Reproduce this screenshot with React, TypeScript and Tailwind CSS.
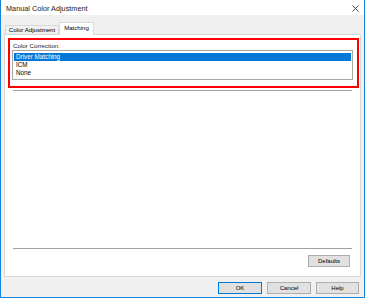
import React from 'react';

const options = ['Driver Matching', 'ICM', 'None'];

const DialogButton: React.FC<{ label: string; isDefault?: boolean; className?: string }> = ({ label, isDefault, className }) => (
  <button
    className={`h-[12px] flex items-center justify-center bg-[#e1e1e1] text-[6px] leading-none text-black border ${
      isDefault ? 'border-[#0078d7]' : 'border-[#adadad]'
    } ${className ?? ''}`}
  >
    {label}
  </button>
);

export default function App() {
  return (
    <div className="w-[365px] h-[299px] bg-white font-['Liberation_Sans',Arial,sans-serif] text-black">
      <div className="flex flex-col h-[298px] border-x border-b border-[#1883d7] bg-[#f0f0f0]">
        {/* title bar */}
        <div className="h-[15px] bg-white flex items-center justify-between pl-[5px] pr-[5px]">
          <span className="text-[7.3px] leading-none text-[#1a1a1a] pt-[2px]">Manual Color Adjustment</span>
          <svg width="7" height="7" viewBox="0 0 7 7" className="mt-[1px]">
            <path d="M0.5 0.5 L6.5 6.5 M6.5 0.5 L0.5 6.5" stroke="#333" strokeWidth="0.9" fill="none" />
          </svg>
        </div>

        <div className="flex flex-col px-[3px] pt-[7px]">
          {/* tabs */}
          <div className="flex items-end h-[12px] pl-[1px]">
            <div className="h-[9px] w-[54px] flex items-center justify-center border border-b-0 border-[#d9d9d9] bg-[#f0f0f0] text-[6.1px] leading-none">
              Color Adjustment
            </div>
            <div className="relative z-10 -mb-px h-[13px] w-[35px] flex items-center justify-center border border-b-0 border-[#d9d9d9] bg-white text-[6.1px] leading-none pb-[2px]">
              Matching
            </div>
          </div>

          {/* tab panel */}
          <div className="h-[243px] border border-[#d9d9d9] bg-white flex flex-col">
            <div className="ml-[3px] mt-[3px] w-[351px] h-[50px] border-2 border-[#ff0000] flex flex-col">
              <div className="pl-[3px] pt-[2px] h-[10px] text-[6.2px] leading-[8px] text-[#1a1a1a]">Color Correction:</div>
              <div className="ml-[2px] w-[341px] h-[30px] border border-[#a8a8a8] bg-white pt-[2px] pl-[1px] pr-[1px]">
                {options.map((o, i) => (
                  <div
                    key={o}
                    className={`h-[8px] pl-[2px] text-[6.3px] leading-[8px] ${i === 0 ? 'bg-[#0078d7] text-white' : 'text-black'}`}
                  >
                    {o}
                  </div>
                ))}
              </div>
            </div>
            <div className="ml-[8px] mt-[2px] w-[339px] h-px bg-[#a0a0a0]" />
            <div className="flex-1" />
            <div className="ml-[8px] w-[339px] h-px bg-[#a0a0a0]" />
            <div className="flex justify-end pr-[10px] pt-[6px] pb-[9px]">
              <DialogButton label="Defaults" className="w-[42px]" />
            </div>
          </div>

          {/* dialog buttons */}
          <div className="flex justify-end gap-[5px] pr-[2px] mt-[5px]">
            <DialogButton label="OK" isDefault className="w-[44px]" />
            <DialogButton label="Cancel" className="w-[44px]" />
            <DialogButton label="Help" className="w-[43px]" />
          </div>
        </div>
      </div>
    </div>
  );
}
